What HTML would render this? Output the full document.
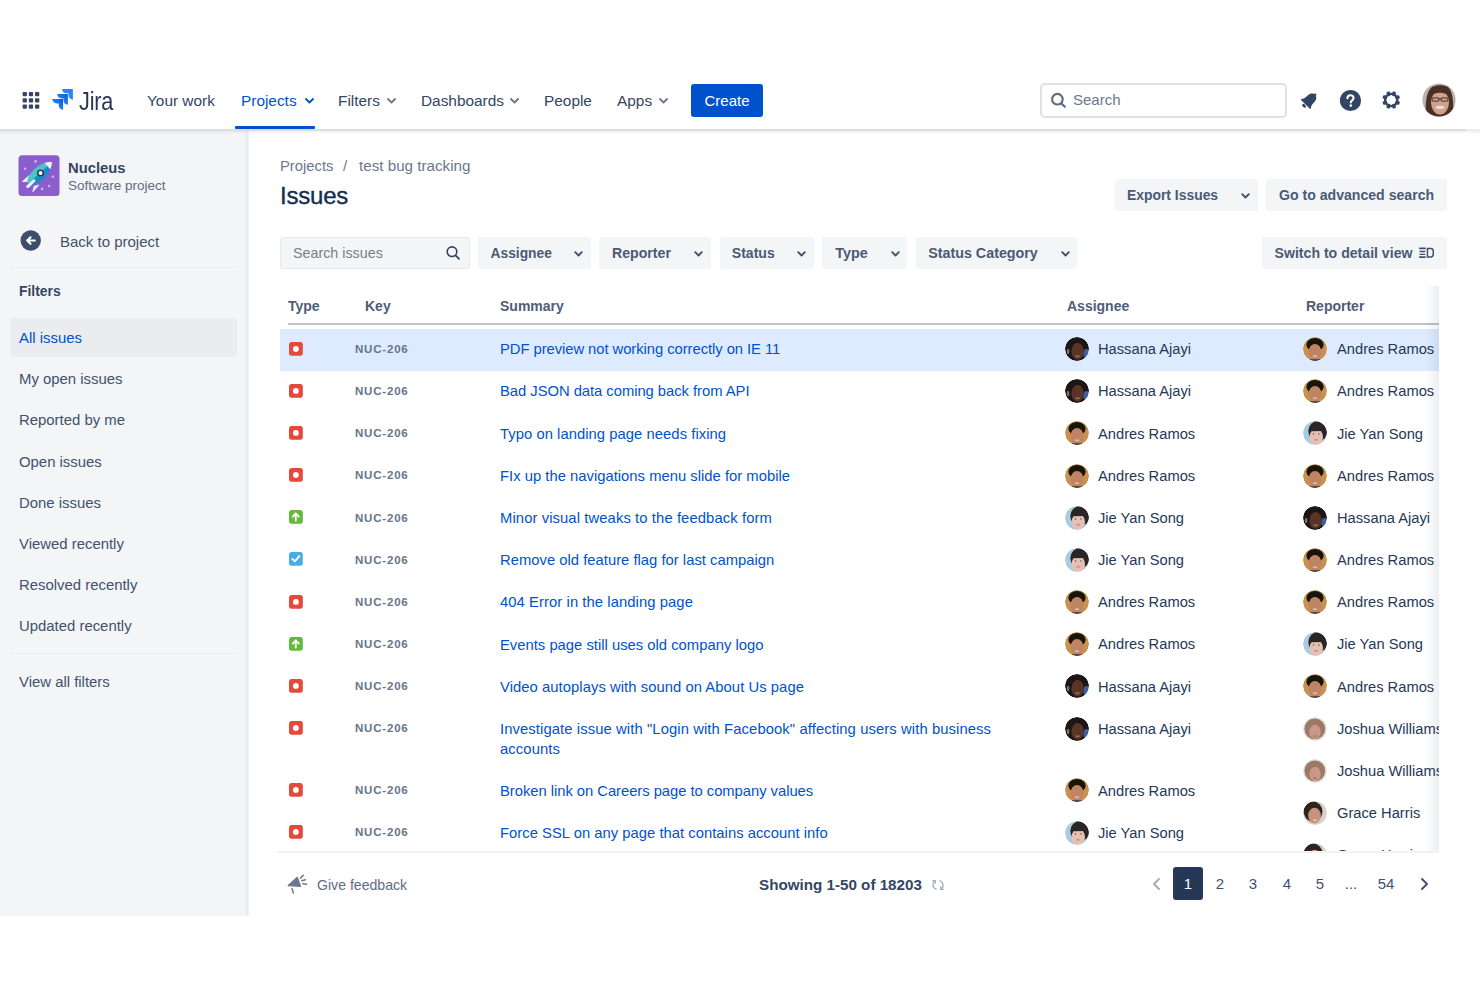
<!DOCTYPE html>
<html><head><meta charset="utf-8">
<style>
*{box-sizing:border-box;margin:0;padding:0}
html,body{width:1480px;height:987px;overflow:hidden;background:#fff;font-family:"Liberation Sans",sans-serif;color:#172B4D;position:relative}
.a{position:absolute;white-space:nowrap}
/* header */
#hdr{position:absolute;left:0;top:72px;width:1480px;height:57px;background:#fff}
#hdrline{position:absolute;left:0;top:129px;width:1466px;height:2px;background:#DADDE3}
#hdrline2{position:absolute;left:1466px;top:129px;width:14px;height:2px;background:#EBECF0}
.nav{position:absolute;top:91.5px;font-size:15.4px;color:#344563;line-height:18px}
.chev{position:absolute;width:9px;height:6px}
/* sidebar */
#side{position:absolute;left:0;top:131px;width:246px;height:784.7px;background:#F4F5F7}
#sideb{position:absolute;left:245px;top:131px;width:4px;height:784.7px;background:linear-gradient(to right,#F1F2F4,#E9EAEE 50%,#EDEEF1 75%,#F5F6F8)}
.si{position:absolute;left:19px;font-size:14.9px;color:#42526E;line-height:18px}
/* main */
.btn{position:absolute;height:32px;background:#F4F5F7;border-radius:3px;font-size:13.8px;font-weight:700;color:#4A5A75;line-height:32px}
.th{position:absolute;top:297px;font-size:14px;font-weight:700;color:#4E5D78;line-height:18px}
.key{position:absolute;left:355px;font-size:11.5px;font-weight:700;color:#67748A;letter-spacing:0.8px;line-height:14px}
.sum{position:absolute;left:500px;font-size:14.8px;color:#0052CC;line-height:20.5px}
.nm{position:absolute;font-size:14.7px;color:#253858;line-height:18px}
.av{position:absolute;width:24px;height:24px;border-radius:50%}
.ic{position:absolute;left:289px;width:14px;height:14px;border-radius:2px}
.pg{position:absolute;top:875.1px;font-size:15px;color:#42526E;line-height:18px;text-align:center}
</style></head>
<body>
<div id="hdr"></div>
<div id="hdrline"></div><div id="hdrline2"></div>

<!-- header content -->
<svg class="a" style="left:22px;top:92px" width="18" height="18" viewBox="0 0 18 18">
<g fill="#344563">
<rect x="0.6" y="0" width="4.3" height="4.3" rx="1"/><rect x="6.8" y="0" width="4.3" height="4.3" rx="1"/><rect x="13" y="0" width="4.3" height="4.3" rx="1"/>
<rect x="0.6" y="6.2" width="4.3" height="4.3" rx="1"/><rect x="6.8" y="6.2" width="4.3" height="4.3" rx="1"/><rect x="13" y="6.2" width="4.3" height="4.3" rx="1"/>
<rect x="0.6" y="12.4" width="4.3" height="4.3" rx="1"/><rect x="6.8" y="12.4" width="4.3" height="4.3" rx="1"/><rect x="13" y="12.4" width="4.3" height="4.3" rx="1"/>
</g></svg>
<svg class="a" style="left:50px;top:87px" width="26" height="25" viewBox="0 0 26 25">
<defs><linearGradient id="jg" gradientUnits="objectBoundingBox" x1="0.95" y1="0.05" x2="0.35" y2="0.6"><stop offset="0" stop-color="#0B5CD6"/><stop offset="1" stop-color="#2684FF"/></linearGradient></defs>
<path transform="translate(12.1,1.9)" fill="#2684FF" d="M0 0H10.8V10.8Q6.6 10.2 6.4 6.2V4.4H4.6Q0.4 4.2 0 0Z"/>
<path transform="translate(7.1,7)" fill="url(#jg)" d="M0 0H10.8V10.8Q6.6 10.2 6.4 6.2V4.4H4.6Q0.4 4.2 0 0Z"/>
<path transform="translate(2.3,12)" fill="url(#jg)" d="M0 0H10.8V10.8Q6.6 10.2 6.4 6.2V4.4H4.6Q0.4 4.2 0 0Z"/>
</svg>
<div class="a" style="left:79px;top:87.5px;font-size:25.5px;color:#253858;line-height:26px;letter-spacing:-0.2px;transform:scaleX(0.85);transform-origin:0 0">Jira</div>
<div class="nav" style="left:147px">Your work</div>
<div class="nav" style="left:241px;color:#0052CC">Projects</div>
<svg class="chev" style="left:305px;top:98px" viewBox="0 0 9 6"><path d="M1 1l3.5 3.5L8 1" stroke="#0052CC" stroke-width="1.8" fill="none" stroke-linecap="round" stroke-linejoin="round"/></svg>
<div class="a" style="left:235px;top:126px;width:80px;height:3px;background:#0052CC;border-radius:1px"></div>
<div class="nav" style="left:338px">Filters</div>
<svg class="chev" style="left:387px;top:98px" viewBox="0 0 9 6"><path d="M1 1l3.5 3.5L8 1" stroke="#6B778C" stroke-width="1.8" fill="none" stroke-linecap="round" stroke-linejoin="round"/></svg>
<div class="nav" style="left:421px">Dashboards</div>
<svg class="chev" style="left:510px;top:98px" viewBox="0 0 9 6"><path d="M1 1l3.5 3.5L8 1" stroke="#6B778C" stroke-width="1.8" fill="none" stroke-linecap="round" stroke-linejoin="round"/></svg>
<div class="nav" style="left:544px">People</div>
<div class="nav" style="left:617px">Apps</div>
<svg class="chev" style="left:659px;top:98px" viewBox="0 0 9 6"><path d="M1 1l3.5 3.5L8 1" stroke="#6B778C" stroke-width="1.8" fill="none" stroke-linecap="round" stroke-linejoin="round"/></svg>
<div class="a" style="left:691px;top:84px;width:72px;height:33px;background:#0052CC;border-radius:3px;color:#fff;font-size:15px;line-height:33px;text-align:center">Create</div>
<div class="a" style="left:1040px;top:83px;width:247px;height:35px;border:2px solid #DFE1E6;border-radius:5px;background:#fff"></div>
<svg class="a" style="left:1050px;top:92px" width="17" height="17" viewBox="0 0 17 17"><circle cx="7.4" cy="7.2" r="5.3" stroke="#5E6C84" stroke-width="2.1" fill="none"/><path d="M11.2 11.2l3.6 3.6" stroke="#5E6C84" stroke-width="2.2" stroke-linecap="round"/></svg>
<div class="a" style="left:1073px;top:91px;font-size:15px;color:#6B778C;line-height:18px">Search</div>
<svg class="a" style="left:1298px;top:89px" width="23" height="23" viewBox="0 0 23 23"><g transform="translate(11.6 11.2) rotate(45) translate(0 -7.6)" fill="#344563"><path d="M0 0C2.9 0 4.7 2.3 4.7 5.2C4.7 8.6 5.1 10.6 6.7 12.6C7 13 6.7 13.5 6.2 13.5H-6.2C-6.7 13.5-7 13-6.7 12.6C-5.1 10.6-4.7 8.6-4.7 5.2C-4.7 2.3-2.9 0 0 0Z"/><rect x="-1.1" y="-1.3" width="2.2" height="2" rx="0.6"/><ellipse cx="0" cy="15.5" rx="2.3" ry="1.4"/></g></svg>
<svg class="a" style="left:1339px;top:89px" width="23" height="23" viewBox="0 0 23 23"><circle cx="11.5" cy="11.5" r="10.6" fill="#344563"/><path d="M8.4 9.2c0-1.8 1.4-3 3.1-3s3.1 1.2 3.1 2.9c0 2.2-2.8 2.3-2.8 4.3" stroke="#fff" stroke-width="2.1" fill="none" stroke-linecap="round"/><circle cx="11.8" cy="16.6" r="1.3" fill="#fff"/></svg>
<svg class="a" style="left:1380px;top:89px" width="22" height="22" viewBox="0 0 22 22"><g transform="translate(11.2 11)" fill="#344563"><rect x="-1.75" y="-9" width="3.5" height="4.5" rx="1" transform="rotate(22.5)"/><rect x="-1.75" y="-9" width="3.5" height="4.5" rx="1" transform="rotate(67.5)"/><rect x="-1.75" y="-9" width="3.5" height="4.5" rx="1" transform="rotate(112.5)"/><rect x="-1.75" y="-9" width="3.5" height="4.5" rx="1" transform="rotate(157.5)"/><rect x="-1.75" y="-9" width="3.5" height="4.5" rx="1" transform="rotate(202.5)"/><rect x="-1.75" y="-9" width="3.5" height="4.5" rx="1" transform="rotate(247.5)"/><rect x="-1.75" y="-9" width="3.5" height="4.5" rx="1" transform="rotate(292.5)"/><rect x="-1.75" y="-9" width="3.5" height="4.5" rx="1" transform="rotate(337.5)"/><circle r="6.2" fill="none" stroke="#344563" stroke-width="2.3"/></g></svg>
<svg class="a" style="left:1422px;top:83px" width="34" height="34" viewBox="0 0 34 34"><clipPath id="hav"><circle cx="17" cy="17" r="16.6"/></clipPath><g clip-path="url(#hav)"><rect width="34" height="34" fill="#b9b4ae"/><path d="M4 34C3 22 4 8 10 4C14 1.5 22 1.5 26 4C31 8 32 22 31 34Z" fill="#4a3026"/><ellipse cx="18" cy="19.5" rx="9" ry="12" fill="#d3a187"/><path d="M9 13C11 8.5 15 7 19 7C23 7 26 9 27 13C24 10.5 20 9.5 17 9.8C13.5 10 11 11.2 9 13Z" fill="#4a3026"/><g stroke="#5c4c4e" stroke-width="1.3" fill="none"><rect x="10.2" y="14.8" width="6.6" height="3.4" rx="1"/><rect x="19.2" y="14.8" width="6.6" height="3.4" rx="1"/><path d="M16.8 16h2.4"/></g><ellipse cx="18" cy="24.3" rx="4.2" ry="1.5" fill="#efe1d9"/></g></svg>

<div id="side"></div><div id="sideb"></div>

<!-- sidebar content -->
<svg class="a" style="left:18px;top:155px" width="42" height="42" viewBox="0 0 42 42">
<rect x="0.5" y="0.2" width="41" height="40.8" rx="3.5" fill="#8A5ECF"/>
<g fill="#C9B3EE"><circle cx="17.6" cy="6.4" r="1.3"/><circle cx="7.1" cy="13.8" r="1.3"/><circle cx="34.8" cy="21.8" r="1.3"/><circle cx="31.1" cy="31.1" r="1.3"/><circle cx="24.1" cy="33.9" r="1.3"/></g>
<path d="M4.3 26.6L11.2 20.6L10.2 26.4Z" fill="#EEF2F8" stroke="#EEF2F8" stroke-width="0.8" stroke-linejoin="round"/>
<path d="M14.8 36.8L21 30L16 31.2Z" fill="#E6ECF4" stroke="#E6ECF4" stroke-width="0.8" stroke-linejoin="round"/>
<g transform="translate(21.5 18.5) rotate(-43)">
<path d="M-15.5 0C-14.5-5.5-6-6.6 1-6.6C5.5-6.5 8.5-5 10.8-4.3V0Z" fill="#4BC6C3"/>
<path d="M-15.5 0C-14.5 5.5-6 6.6 1 6.6C5.5 6.5 8.5 5 10.8 4.3V0Z" fill="#1A8DC5"/>
<path d="M10.8-4.3C13-3.5 15.5-1.6 16.9 0C15.5 1.6 13 3.5 10.8 4.3Z" fill="#F0F3F8"/>
<path d="M-17.5 1.5H-9" stroke="#EEF2F8" stroke-width="3" stroke-linecap="round"/>
</g>
<circle cx="22.5" cy="18" r="2.8" fill="#fff" stroke="#253858" stroke-width="1.5"/>
</svg>
<div class="a" style="left:68px;top:159px;font-size:14.8px;font-weight:700;color:#344563;line-height:18px">Nucleus</div>
<div class="a" style="left:68px;top:177px;font-size:13.5px;color:#5E6C84;line-height:17px">Software project</div>
<svg class="a" style="left:20px;top:230px" width="22" height="22" viewBox="0 0 22 22"><circle cx="10.7" cy="10.5" r="10.2" fill="#3D4E6B"/><path d="M14.8 10.5H7.5M10.5 7.2L7.2 10.5l3.3 3.3" stroke="#fff" stroke-width="2.2" fill="none" stroke-linecap="round" stroke-linejoin="round"/></svg>
<div class="si" style="left:60px;top:233px;font-size:15px">Back to project</div>
<div class="a" style="left:10px;top:267px;width:227px;height:1px;background:#EBECF0"></div>
<div class="si" style="top:282px;font-size:13.9px;font-weight:700;color:#344563">Filters</div>
<div class="a" style="left:10px;top:318px;width:227px;height:39px;background:#EBECF0;border-radius:3px"></div>
<div class="si" style="top:329px;color:#0052CC">All issues</div>
<div class="si" style="top:370px">My open issues</div>
<div class="si" style="top:411px">Reported by me</div>
<div class="si" style="top:453px">Open issues</div>
<div class="si" style="top:494px">Done issues</div>
<div class="si" style="top:535px">Viewed recently</div>
<div class="si" style="top:576px">Resolved recently</div>
<div class="si" style="top:617px">Updated recently</div>
<div class="a" style="left:10px;top:653px;width:227px;height:1px;background:#EBECF0"></div>
<div class="si" style="top:673px">View all filters</div>


<!-- main content -->
<div class="a" style="left:280px;top:157.4px;font-size:14.8px;color:#6B778C;line-height:18px">Projects</div>
<div class="a" style="left:343px;top:157.4px;font-size:15px;color:#6B778C;line-height:18px">/</div>
<div class="a" style="left:359px;top:157.4px;font-size:15.2px;color:#6B778C;line-height:18px">test bug tracking</div>
<div class="a" style="left:280px;top:182px;font-size:24px;font-weight:400;color:#172B4D;line-height:28px;-webkit-text-stroke:0.35px #172B4D;letter-spacing:-0.2px">Issues</div>
<div class="btn" style="left:1115px;top:179px;width:143px;padding-left:12px;font-size:13.9px">Export Issues</div>
<svg class="chev" style="left:1240.5px;top:193px" viewBox="0 0 9 6"><path d="M1.2 1.2l3.3 3.3 3.3-3.3" stroke="#42526E" stroke-width="1.9" fill="none" stroke-linecap="round" stroke-linejoin="round"/></svg>
<div class="btn" style="left:1266px;top:179px;width:181px;padding-left:13px;font-size:14.1px">Go to advanced search</div>
<div class="a" style="left:280px;top:237px;width:190px;height:32px;background:#F4F5F7;border:1px solid #E6E8EC;border-radius:3px"></div>
<div class="a" style="left:293px;top:244px;font-size:14.3px;color:#7A7F87;line-height:18px">Search issues</div>
<svg class="a" style="left:445px;top:245px" width="16" height="16" viewBox="0 0 16 16"><circle cx="7" cy="6.7" r="4.8" stroke="#344563" stroke-width="1.6" fill="none"/><path d="M10.5 10.3l3.6 3.6" stroke="#344563" stroke-width="1.7" stroke-linecap="round"/></svg>
<div class="btn" style="left:478px;top:237px;width:113px;padding-left:12.5px;padding-top:1px;font-size:13.8px">Assignee</div>
<svg class="chev" style="left:573.5px;top:251px" viewBox="0 0 9 6"><path d="M1.2 1.2l3.3 3.3 3.3-3.3" stroke="#42526E" stroke-width="1.9" fill="none" stroke-linecap="round" stroke-linejoin="round"/></svg>
<div class="btn" style="left:599px;top:237px;width:112px;padding-left:13px;font-size:14.15px">Reporter</div>
<svg class="chev" style="left:694px;top:251px" viewBox="0 0 9 6"><path d="M1.2 1.2l3.3 3.3 3.3-3.3" stroke="#42526E" stroke-width="1.9" fill="none" stroke-linecap="round" stroke-linejoin="round"/></svg>
<div class="btn" style="left:719.5px;top:237px;width:94.5px;padding-left:12.3px;font-size:14.05px">Status</div>
<svg class="chev" style="left:797px;top:251px" viewBox="0 0 9 6"><path d="M1.2 1.2l3.3 3.3 3.3-3.3" stroke="#42526E" stroke-width="1.9" fill="none" stroke-linecap="round" stroke-linejoin="round"/></svg>
<div class="btn" style="left:822px;top:237px;width:85px;padding-left:13.3px;font-size:14.4px">Type</div>
<svg class="chev" style="left:891px;top:251px" viewBox="0 0 9 6"><path d="M1.2 1.2l3.3 3.3 3.3-3.3" stroke="#42526E" stroke-width="1.9" fill="none" stroke-linecap="round" stroke-linejoin="round"/></svg>
<div class="btn" style="left:915.5px;top:237px;width:161.5px;padding-left:12.7px;font-size:14.3px">Status Category</div>
<svg class="chev" style="left:1060.5px;top:251px" viewBox="0 0 9 6"><path d="M1.2 1.2l3.3 3.3 3.3-3.3" stroke="#42526E" stroke-width="1.9" fill="none" stroke-linecap="round" stroke-linejoin="round"/></svg>
<div class="btn" style="left:1262px;top:237px;width:185px;padding-left:12.6px;font-size:14.1px">Switch to detail view</div>
<svg class="a" style="left:1418px;top:246px" width="17" height="13" viewBox="0 0 17 13"><g stroke="#42526E" fill="none"><path d="M1.8 2.4h5.2M1.8 11.1h5.2" stroke-width="1.7" stroke-linecap="round"/><path d="M1.6 5.5h5.6M1.6 8.4h5.6" stroke-width="1.3"/><path d="M9.45 2.55H12.6Q15.25 2.55 15.25 5.2V8.3Q15.25 10.95 12.6 10.95H9.45Z" stroke-width="1.5"/></g></svg>

<!-- table -->
<svg width="0" height="0" style="position:absolute"><filter id="avblur"><feGaussianBlur stdDeviation="0.45"/></filter></svg>
<div class="a" style="left:280px;top:286px;width:1159px;height:565px;overflow:hidden">
<div style="position:absolute;left:-280px;top:-286px;width:1480px;height:987px">
<div class="a" style="left:280px;top:329px;width:1159px;height:42px;background:#DEEBFF"></div>
<div class="a" style="left:288px;top:322.6px;width:1151px;height:2.2px;background:#BDC2CC"></div>
<div class="th" style="left:288px">Type</div><div class="th" style="left:365px">Key</div><div class="th" style="left:500px">Summary</div><div class="th" style="left:1067px">Assignee</div><div class="th" style="left:1306px">Reporter</div>
<svg class="ic" style="top:341.5px" width="15" height="15" viewBox="0 0 15 15"><rect x="0" y="0" width="14.8" height="14.8" rx="2.3" fill="#E5493A"/><circle cx="7.4" cy="7.4" r="3.1" fill="#fff"/></svg>
<div class="key" style="top:341.8px">NUC-206</div>
<div class="sum" style="top:339.30px;letter-spacing:-0.057px">PDF preview not working correctly on IE 11</div>
<svg class="av" style="left:1065px;top:337px" width="25" height="25" viewBox="0 0 25 25"><clipPath id="av1"><circle cx="12.5" cy="12.5" r="12.4"/></clipPath><g clip-path="url(#av1)"><g filter="url(#avblur)"><circle cx="12.5" cy="12.5" r="12.5" fill="#1d1613"/><ellipse cx="22.3" cy="17.5" rx="3.2" ry="5" fill="#3f5f9f"/><ellipse cx="3.2" cy="15" rx="1.4" ry="2.8" fill="#7d736d"/><ellipse cx="13.1" cy="15" rx="6.4" ry="8.8" fill="#5a3626"/><ellipse cx="13.1" cy="20" rx="2.4" ry="1" fill="#8e6d60"/></g></g></svg>
<div class="nm" style="left:1098px;top:340.1px">Hassana Ajayi</div>
<svg class="ic" style="top:383.68px" width="15" height="15" viewBox="0 0 15 15"><rect x="0" y="0" width="14.8" height="14.8" rx="2.3" fill="#E5493A"/><circle cx="7.4" cy="7.4" r="3.1" fill="#fff"/></svg>
<div class="key" style="top:384.0px">NUC-206</div>
<div class="sum" style="top:381.48px;letter-spacing:-0.041px">Bad JSON data coming back from API</div>
<svg class="av" style="left:1065px;top:379.18px" width="25" height="25" viewBox="0 0 25 25"><clipPath id="av2"><circle cx="12.5" cy="12.5" r="12.4"/></clipPath><g clip-path="url(#av2)"><g filter="url(#avblur)"><circle cx="12.5" cy="12.5" r="12.5" fill="#1d1613"/><ellipse cx="22.3" cy="17.5" rx="3.2" ry="5" fill="#3f5f9f"/><ellipse cx="3.2" cy="15" rx="1.4" ry="2.8" fill="#7d736d"/><ellipse cx="13.1" cy="15" rx="6.4" ry="8.8" fill="#5a3626"/><ellipse cx="13.1" cy="20" rx="2.4" ry="1" fill="#8e6d60"/></g></g></svg>
<div class="nm" style="left:1098px;top:382.3px">Hassana Ajayi</div>
<svg class="ic" style="top:425.86px" width="15" height="15" viewBox="0 0 15 15"><rect x="0" y="0" width="14.8" height="14.8" rx="2.3" fill="#E5493A"/><circle cx="7.4" cy="7.4" r="3.1" fill="#fff"/></svg>
<div class="key" style="top:426.2px">NUC-206</div>
<div class="sum" style="top:423.66px;letter-spacing:0.044px">Typo on landing page needs fixing</div>
<svg class="av" style="left:1065px;top:421.36px" width="25" height="25" viewBox="0 0 25 25"><clipPath id="av3"><circle cx="12.5" cy="12.5" r="12.4"/></clipPath><g clip-path="url(#av3)"><g filter="url(#avblur)"><circle cx="12.5" cy="12.5" r="12.5" fill="#c8914f"/><ellipse cx="12.5" cy="8" rx="9" ry="7" fill="#17120f"/><ellipse cx="12.5" cy="15.5" rx="6.6" ry="8.2" fill="#bf8464"/><ellipse cx="12.5" cy="20" rx="2.6" ry="1.1" fill="#dcb8a6"/><rect x="7" y="23.2" width="11" height="2" fill="#3a3438"/></g></g></svg>
<div class="nm" style="left:1098px;top:424.5px">Andres Ramos</div>
<svg class="ic" style="top:468.04px" width="15" height="15" viewBox="0 0 15 15"><rect x="0" y="0" width="14.8" height="14.8" rx="2.3" fill="#E5493A"/><circle cx="7.4" cy="7.4" r="3.1" fill="#fff"/></svg>
<div class="key" style="top:468.3px">NUC-206</div>
<div class="sum" style="top:465.84px;letter-spacing:0.011px">FIx up the navigations menu slide for mobile</div>
<svg class="av" style="left:1065px;top:463.54px" width="25" height="25" viewBox="0 0 25 25"><clipPath id="av4"><circle cx="12.5" cy="12.5" r="12.4"/></clipPath><g clip-path="url(#av4)"><g filter="url(#avblur)"><circle cx="12.5" cy="12.5" r="12.5" fill="#c8914f"/><ellipse cx="12.5" cy="8" rx="9" ry="7" fill="#17120f"/><ellipse cx="12.5" cy="15.5" rx="6.6" ry="8.2" fill="#bf8464"/><ellipse cx="12.5" cy="20" rx="2.6" ry="1.1" fill="#dcb8a6"/><rect x="7" y="23.2" width="11" height="2" fill="#3a3438"/></g></g></svg>
<div class="nm" style="left:1098px;top:466.6px">Andres Ramos</div>
<svg class="ic" style="top:510.22px" width="15" height="15" viewBox="0 0 15 15"><rect x="0" y="0" width="14.8" height="14.8" rx="2.3" fill="#63BA3C"/><path d="M7.25 11.3V3.8M4 7L7.25 3.7 10.5 7" stroke="#fff" stroke-width="2" fill="none" stroke-linecap="round" stroke-linejoin="round"/></svg>
<div class="key" style="top:510.5px">NUC-206</div>
<div class="sum" style="top:508.02px;letter-spacing:0.095px">Minor visual tweaks to the feedback form</div>
<svg class="av" style="left:1065px;top:505.72px" width="25" height="25" viewBox="0 0 25 25"><clipPath id="av5"><circle cx="12.5" cy="12.5" r="12.4"/></clipPath><g clip-path="url(#av5)"><g filter="url(#avblur)"><circle cx="12.5" cy="12.5" r="12.5" fill="#a9cde0"/><ellipse cx="15.5" cy="10.5" rx="10" ry="10.5" fill="#2a2527"/><ellipse cx="13.8" cy="16.8" rx="7" ry="8.6" fill="#e6c0b2"/><path d="M6.6 10.6C7 6 10.5 3.6 15 3.6C19.5 3.6 21.8 6.5 22 10.5Z" fill="#2a2527"/><circle cx="11" cy="13.6" r="0.8" fill="#5a4a50"/><circle cx="16.6" cy="13.6" r="0.8" fill="#5a4a50"/><ellipse cx="13.8" cy="19.6" rx="2.3" ry="1" fill="#d88f99"/></g></g></svg>
<div class="nm" style="left:1098px;top:508.8px">Jie Yan Song</div>
<svg class="ic" style="top:552.4px" width="15" height="15" viewBox="0 0 15 15"><rect x="0" y="0" width="14.8" height="14.8" rx="2.3" fill="#4BADE8"/><path d="M3.6 7.4l2.6 2.6 4.9-5.6" stroke="#fff" stroke-width="2" fill="none" stroke-linecap="round" stroke-linejoin="round"/></svg>
<div class="key" style="top:552.7px">NUC-206</div>
<div class="sum" style="top:550.20px;letter-spacing:0.01px">Remove old feature flag for last campaign</div>
<svg class="av" style="left:1065px;top:547.9px" width="25" height="25" viewBox="0 0 25 25"><clipPath id="av6"><circle cx="12.5" cy="12.5" r="12.4"/></clipPath><g clip-path="url(#av6)"><g filter="url(#avblur)"><circle cx="12.5" cy="12.5" r="12.5" fill="#a9cde0"/><ellipse cx="15.5" cy="10.5" rx="10" ry="10.5" fill="#2a2527"/><ellipse cx="13.8" cy="16.8" rx="7" ry="8.6" fill="#e6c0b2"/><path d="M6.6 10.6C7 6 10.5 3.6 15 3.6C19.5 3.6 21.8 6.5 22 10.5Z" fill="#2a2527"/><circle cx="11" cy="13.6" r="0.8" fill="#5a4a50"/><circle cx="16.6" cy="13.6" r="0.8" fill="#5a4a50"/><ellipse cx="13.8" cy="19.6" rx="2.3" ry="1" fill="#d88f99"/></g></g></svg>
<div class="nm" style="left:1098px;top:551.0px">Jie Yan Song</div>
<svg class="ic" style="top:594.58px" width="15" height="15" viewBox="0 0 15 15"><rect x="0" y="0" width="14.8" height="14.8" rx="2.3" fill="#E5493A"/><circle cx="7.4" cy="7.4" r="3.1" fill="#fff"/></svg>
<div class="key" style="top:594.9px">NUC-206</div>
<div class="sum" style="top:592.38px;letter-spacing:0.073px">404 Error in the landing page</div>
<svg class="av" style="left:1065px;top:590.08px" width="25" height="25" viewBox="0 0 25 25"><clipPath id="av7"><circle cx="12.5" cy="12.5" r="12.4"/></clipPath><g clip-path="url(#av7)"><g filter="url(#avblur)"><circle cx="12.5" cy="12.5" r="12.5" fill="#c8914f"/><ellipse cx="12.5" cy="8" rx="9" ry="7" fill="#17120f"/><ellipse cx="12.5" cy="15.5" rx="6.6" ry="8.2" fill="#bf8464"/><ellipse cx="12.5" cy="20" rx="2.6" ry="1.1" fill="#dcb8a6"/><rect x="7" y="23.2" width="11" height="2" fill="#3a3438"/></g></g></svg>
<div class="nm" style="left:1098px;top:593.2px">Andres Ramos</div>
<svg class="ic" style="top:636.76px" width="15" height="15" viewBox="0 0 15 15"><rect x="0" y="0" width="14.8" height="14.8" rx="2.3" fill="#63BA3C"/><path d="M7.25 11.3V3.8M4 7L7.25 3.7 10.5 7" stroke="#fff" stroke-width="2" fill="none" stroke-linecap="round" stroke-linejoin="round"/></svg>
<div class="key" style="top:637.1px">NUC-206</div>
<div class="sum" style="top:634.56px;letter-spacing:0.005px">Events page still uses old company logo</div>
<svg class="av" style="left:1065px;top:632.26px" width="25" height="25" viewBox="0 0 25 25"><clipPath id="av8"><circle cx="12.5" cy="12.5" r="12.4"/></clipPath><g clip-path="url(#av8)"><g filter="url(#avblur)"><circle cx="12.5" cy="12.5" r="12.5" fill="#c8914f"/><ellipse cx="12.5" cy="8" rx="9" ry="7" fill="#17120f"/><ellipse cx="12.5" cy="15.5" rx="6.6" ry="8.2" fill="#bf8464"/><ellipse cx="12.5" cy="20" rx="2.6" ry="1.1" fill="#dcb8a6"/><rect x="7" y="23.2" width="11" height="2" fill="#3a3438"/></g></g></svg>
<div class="nm" style="left:1098px;top:635.4px">Andres Ramos</div>
<svg class="ic" style="top:678.94px" width="15" height="15" viewBox="0 0 15 15"><rect x="0" y="0" width="14.8" height="14.8" rx="2.3" fill="#E5493A"/><circle cx="7.4" cy="7.4" r="3.1" fill="#fff"/></svg>
<div class="key" style="top:679.2px">NUC-206</div>
<div class="sum" style="top:676.74px;letter-spacing:0.054px">Video autoplays with sound on About Us page</div>
<svg class="av" style="left:1065px;top:674.44px" width="25" height="25" viewBox="0 0 25 25"><clipPath id="av9"><circle cx="12.5" cy="12.5" r="12.4"/></clipPath><g clip-path="url(#av9)"><g filter="url(#avblur)"><circle cx="12.5" cy="12.5" r="12.5" fill="#1d1613"/><ellipse cx="22.3" cy="17.5" rx="3.2" ry="5" fill="#3f5f9f"/><ellipse cx="3.2" cy="15" rx="1.4" ry="2.8" fill="#7d736d"/><ellipse cx="13.1" cy="15" rx="6.4" ry="8.8" fill="#5a3626"/><ellipse cx="13.1" cy="20" rx="2.4" ry="1" fill="#8e6d60"/></g></g></svg>
<div class="nm" style="left:1098px;top:677.5px">Hassana Ajayi</div>
<svg class="ic" style="top:721.12px" width="15" height="15" viewBox="0 0 15 15"><rect x="0" y="0" width="14.8" height="14.8" rx="2.3" fill="#E5493A"/><circle cx="7.4" cy="7.4" r="3.1" fill="#fff"/></svg>
<div class="key" style="top:721.4px">NUC-206</div>
<div class="sum" style="top:718.92px;letter-spacing:0.096px">Investigate issue with "Login with Facebook" affecting users with business<br>accounts</div>
<svg class="av" style="left:1065px;top:716.62px" width="25" height="25" viewBox="0 0 25 25"><clipPath id="av10"><circle cx="12.5" cy="12.5" r="12.4"/></clipPath><g clip-path="url(#av10)"><g filter="url(#avblur)"><circle cx="12.5" cy="12.5" r="12.5" fill="#1d1613"/><ellipse cx="22.3" cy="17.5" rx="3.2" ry="5" fill="#3f5f9f"/><ellipse cx="3.2" cy="15" rx="1.4" ry="2.8" fill="#7d736d"/><ellipse cx="13.1" cy="15" rx="6.4" ry="8.8" fill="#5a3626"/><ellipse cx="13.1" cy="20" rx="2.4" ry="1" fill="#8e6d60"/></g></g></svg>
<div class="nm" style="left:1098px;top:719.7px">Hassana Ajayi</div>
<svg class="ic" style="top:782.92px" width="15" height="15" viewBox="0 0 15 15"><rect x="0" y="0" width="14.8" height="14.8" rx="2.3" fill="#E5493A"/><circle cx="7.4" cy="7.4" r="3.1" fill="#fff"/></svg>
<div class="key" style="top:783.2px">NUC-206</div>
<div class="sum" style="top:780.72px;letter-spacing:-0.042px">Broken link on Careers page to company values</div>
<svg class="av" style="left:1065px;top:778.42px" width="25" height="25" viewBox="0 0 25 25"><clipPath id="av11"><circle cx="12.5" cy="12.5" r="12.4"/></clipPath><g clip-path="url(#av11)"><g filter="url(#avblur)"><circle cx="12.5" cy="12.5" r="12.5" fill="#c8914f"/><ellipse cx="12.5" cy="8" rx="9" ry="7" fill="#17120f"/><ellipse cx="12.5" cy="15.5" rx="6.6" ry="8.2" fill="#bf8464"/><ellipse cx="12.5" cy="20" rx="2.6" ry="1.1" fill="#dcb8a6"/><rect x="7" y="23.2" width="11" height="2" fill="#3a3438"/></g></g></svg>
<div class="nm" style="left:1098px;top:781.5px">Andres Ramos</div>
<svg class="ic" style="top:825.1px" width="15" height="15" viewBox="0 0 15 15"><rect x="0" y="0" width="14.8" height="14.8" rx="2.3" fill="#E5493A"/><circle cx="7.4" cy="7.4" r="3.1" fill="#fff"/></svg>
<div class="key" style="top:825.4px">NUC-206</div>
<div class="sum" style="top:822.90px;letter-spacing:0.018px">Force SSL on any page that contains account info</div>
<svg class="av" style="left:1065px;top:820.6px" width="25" height="25" viewBox="0 0 25 25"><clipPath id="av12"><circle cx="12.5" cy="12.5" r="12.4"/></clipPath><g clip-path="url(#av12)"><g filter="url(#avblur)"><circle cx="12.5" cy="12.5" r="12.5" fill="#a9cde0"/><ellipse cx="15.5" cy="10.5" rx="10" ry="10.5" fill="#2a2527"/><ellipse cx="13.8" cy="16.8" rx="7" ry="8.6" fill="#e6c0b2"/><path d="M6.6 10.6C7 6 10.5 3.6 15 3.6C19.5 3.6 21.8 6.5 22 10.5Z" fill="#2a2527"/><circle cx="11" cy="13.6" r="0.8" fill="#5a4a50"/><circle cx="16.6" cy="13.6" r="0.8" fill="#5a4a50"/><ellipse cx="13.8" cy="19.6" rx="2.3" ry="1" fill="#d88f99"/></g></g></svg>
<div class="nm" style="left:1098px;top:823.7px">Jie Yan Song</div>
<svg class="av" style="left:1303px;top:337.0px" width="25" height="25" viewBox="0 0 25 25"><clipPath id="av13"><circle cx="12.5" cy="12.5" r="12.4"/></clipPath><g clip-path="url(#av13)"><g filter="url(#avblur)"><circle cx="12.5" cy="12.5" r="12.5" fill="#c8914f"/><ellipse cx="12.5" cy="8" rx="9" ry="7" fill="#17120f"/><ellipse cx="12.5" cy="15.5" rx="6.6" ry="8.2" fill="#bf8464"/><ellipse cx="12.5" cy="20" rx="2.6" ry="1.1" fill="#dcb8a6"/><rect x="7" y="23.2" width="11" height="2" fill="#3a3438"/></g></g></svg>
<div class="nm" style="left:1337px;top:340.1px">Andres Ramos</div>
<svg class="av" style="left:1303px;top:379.18px" width="25" height="25" viewBox="0 0 25 25"><clipPath id="av14"><circle cx="12.5" cy="12.5" r="12.4"/></clipPath><g clip-path="url(#av14)"><g filter="url(#avblur)"><circle cx="12.5" cy="12.5" r="12.5" fill="#c8914f"/><ellipse cx="12.5" cy="8" rx="9" ry="7" fill="#17120f"/><ellipse cx="12.5" cy="15.5" rx="6.6" ry="8.2" fill="#bf8464"/><ellipse cx="12.5" cy="20" rx="2.6" ry="1.1" fill="#dcb8a6"/><rect x="7" y="23.2" width="11" height="2" fill="#3a3438"/></g></g></svg>
<div class="nm" style="left:1337px;top:382.3px">Andres Ramos</div>
<svg class="av" style="left:1303px;top:421.36px" width="25" height="25" viewBox="0 0 25 25"><clipPath id="av15"><circle cx="12.5" cy="12.5" r="12.4"/></clipPath><g clip-path="url(#av15)"><g filter="url(#avblur)"><circle cx="12.5" cy="12.5" r="12.5" fill="#a9cde0"/><ellipse cx="15.5" cy="10.5" rx="10" ry="10.5" fill="#2a2527"/><ellipse cx="13.8" cy="16.8" rx="7" ry="8.6" fill="#e6c0b2"/><path d="M6.6 10.6C7 6 10.5 3.6 15 3.6C19.5 3.6 21.8 6.5 22 10.5Z" fill="#2a2527"/><circle cx="11" cy="13.6" r="0.8" fill="#5a4a50"/><circle cx="16.6" cy="13.6" r="0.8" fill="#5a4a50"/><ellipse cx="13.8" cy="19.6" rx="2.3" ry="1" fill="#d88f99"/></g></g></svg>
<div class="nm" style="left:1337px;top:424.5px">Jie Yan Song</div>
<svg class="av" style="left:1303px;top:463.54px" width="25" height="25" viewBox="0 0 25 25"><clipPath id="av16"><circle cx="12.5" cy="12.5" r="12.4"/></clipPath><g clip-path="url(#av16)"><g filter="url(#avblur)"><circle cx="12.5" cy="12.5" r="12.5" fill="#c8914f"/><ellipse cx="12.5" cy="8" rx="9" ry="7" fill="#17120f"/><ellipse cx="12.5" cy="15.5" rx="6.6" ry="8.2" fill="#bf8464"/><ellipse cx="12.5" cy="20" rx="2.6" ry="1.1" fill="#dcb8a6"/><rect x="7" y="23.2" width="11" height="2" fill="#3a3438"/></g></g></svg>
<div class="nm" style="left:1337px;top:466.6px">Andres Ramos</div>
<svg class="av" style="left:1303px;top:505.72px" width="25" height="25" viewBox="0 0 25 25"><clipPath id="av17"><circle cx="12.5" cy="12.5" r="12.4"/></clipPath><g clip-path="url(#av17)"><g filter="url(#avblur)"><circle cx="12.5" cy="12.5" r="12.5" fill="#1d1613"/><ellipse cx="22.3" cy="17.5" rx="3.2" ry="5" fill="#3f5f9f"/><ellipse cx="3.2" cy="15" rx="1.4" ry="2.8" fill="#7d736d"/><ellipse cx="13.1" cy="15" rx="6.4" ry="8.8" fill="#5a3626"/><ellipse cx="13.1" cy="20" rx="2.4" ry="1" fill="#8e6d60"/></g></g></svg>
<div class="nm" style="left:1337px;top:508.8px">Hassana Ajayi</div>
<svg class="av" style="left:1303px;top:547.9px" width="25" height="25" viewBox="0 0 25 25"><clipPath id="av18"><circle cx="12.5" cy="12.5" r="12.4"/></clipPath><g clip-path="url(#av18)"><g filter="url(#avblur)"><circle cx="12.5" cy="12.5" r="12.5" fill="#c8914f"/><ellipse cx="12.5" cy="8" rx="9" ry="7" fill="#17120f"/><ellipse cx="12.5" cy="15.5" rx="6.6" ry="8.2" fill="#bf8464"/><ellipse cx="12.5" cy="20" rx="2.6" ry="1.1" fill="#dcb8a6"/><rect x="7" y="23.2" width="11" height="2" fill="#3a3438"/></g></g></svg>
<div class="nm" style="left:1337px;top:551.0px">Andres Ramos</div>
<svg class="av" style="left:1303px;top:590.08px" width="25" height="25" viewBox="0 0 25 25"><clipPath id="av19"><circle cx="12.5" cy="12.5" r="12.4"/></clipPath><g clip-path="url(#av19)"><g filter="url(#avblur)"><circle cx="12.5" cy="12.5" r="12.5" fill="#c8914f"/><ellipse cx="12.5" cy="8" rx="9" ry="7" fill="#17120f"/><ellipse cx="12.5" cy="15.5" rx="6.6" ry="8.2" fill="#bf8464"/><ellipse cx="12.5" cy="20" rx="2.6" ry="1.1" fill="#dcb8a6"/><rect x="7" y="23.2" width="11" height="2" fill="#3a3438"/></g></g></svg>
<div class="nm" style="left:1337px;top:593.2px">Andres Ramos</div>
<svg class="av" style="left:1303px;top:632.26px" width="25" height="25" viewBox="0 0 25 25"><clipPath id="av20"><circle cx="12.5" cy="12.5" r="12.4"/></clipPath><g clip-path="url(#av20)"><g filter="url(#avblur)"><circle cx="12.5" cy="12.5" r="12.5" fill="#a9cde0"/><ellipse cx="15.5" cy="10.5" rx="10" ry="10.5" fill="#2a2527"/><ellipse cx="13.8" cy="16.8" rx="7" ry="8.6" fill="#e6c0b2"/><path d="M6.6 10.6C7 6 10.5 3.6 15 3.6C19.5 3.6 21.8 6.5 22 10.5Z" fill="#2a2527"/><circle cx="11" cy="13.6" r="0.8" fill="#5a4a50"/><circle cx="16.6" cy="13.6" r="0.8" fill="#5a4a50"/><ellipse cx="13.8" cy="19.6" rx="2.3" ry="1" fill="#d88f99"/></g></g></svg>
<div class="nm" style="left:1337px;top:635.4px">Jie Yan Song</div>
<svg class="av" style="left:1303px;top:674.44px" width="25" height="25" viewBox="0 0 25 25"><clipPath id="av21"><circle cx="12.5" cy="12.5" r="12.4"/></clipPath><g clip-path="url(#av21)"><g filter="url(#avblur)"><circle cx="12.5" cy="12.5" r="12.5" fill="#c8914f"/><ellipse cx="12.5" cy="8" rx="9" ry="7" fill="#17120f"/><ellipse cx="12.5" cy="15.5" rx="6.6" ry="8.2" fill="#bf8464"/><ellipse cx="12.5" cy="20" rx="2.6" ry="1.1" fill="#dcb8a6"/><rect x="7" y="23.2" width="11" height="2" fill="#3a3438"/></g></g></svg>
<div class="nm" style="left:1337px;top:677.5px">Andres Ramos</div>
<svg class="av" style="left:1303px;top:716.62px" width="25" height="25" viewBox="0 0 25 25"><clipPath id="av22"><circle cx="12.5" cy="12.5" r="12.4"/></clipPath><g clip-path="url(#av22)"><g filter="url(#avblur)"><circle cx="12.5" cy="12.5" r="12.5" fill="#e2ded9"/><circle cx="12.3" cy="12.3" r="10.8" fill="#9b7966"/><ellipse cx="12.5" cy="15.6" rx="6" ry="7.4" fill="#c99889"/><ellipse cx="12.5" cy="19.8" rx="2.3" ry="0.9" fill="#9a7a70"/></g></g></svg>
<div class="nm" style="left:1337px;top:719.7px">Joshua Williams</div>
<svg class="av" style="left:1303px;top:758.8px" width="25" height="25" viewBox="0 0 25 25"><clipPath id="av23"><circle cx="12.5" cy="12.5" r="12.4"/></clipPath><g clip-path="url(#av23)"><g filter="url(#avblur)"><circle cx="12.5" cy="12.5" r="12.5" fill="#e2ded9"/><circle cx="12.3" cy="12.3" r="10.8" fill="#9b7966"/><ellipse cx="12.5" cy="15.6" rx="6" ry="7.4" fill="#c99889"/><ellipse cx="12.5" cy="19.8" rx="2.3" ry="0.9" fill="#9a7a70"/></g></g></svg>
<div class="nm" style="left:1337px;top:761.9px">Joshua Williams</div>
<svg class="av" style="left:1303px;top:800.98px" width="25" height="25" viewBox="0 0 25 25"><clipPath id="av24"><circle cx="12.5" cy="12.5" r="12.4"/></clipPath><g clip-path="url(#av24)"><g filter="url(#avblur)"><circle cx="12.5" cy="12.5" r="12.5" fill="#d4d2cd"/><ellipse cx="10.5" cy="11" rx="9.8" ry="10.5" fill="#30231d"/><ellipse cx="12" cy="15.2" rx="6.6" ry="8.2" fill="#c8937d"/><ellipse cx="12.6" cy="20" rx="2.4" ry="1" fill="#e0c0b8"/></g></g></svg>
<div class="nm" style="left:1337px;top:804.1px">Grace Harris</div>
<svg class="av" style="left:1303px;top:843.16px" width="25" height="25" viewBox="0 0 25 25"><clipPath id="av25"><circle cx="12.5" cy="12.5" r="12.4"/></clipPath><g clip-path="url(#av25)"><g filter="url(#avblur)"><circle cx="12.5" cy="12.5" r="12.5" fill="#d4d2cd"/><ellipse cx="10.5" cy="11" rx="9.8" ry="10.5" fill="#30231d"/><ellipse cx="12" cy="15.2" rx="6.6" ry="8.2" fill="#c8937d"/><ellipse cx="12.6" cy="20" rx="2.4" ry="1" fill="#e0c0b8"/></g></g></svg>
<div class="nm" style="left:1337px;top:846.3px">Grace Harris</div>
</div>
<div class="a" style="right:0;top:0;width:14px;height:565px;background:linear-gradient(to right,rgba(9,30,66,0),rgba(9,30,66,0.08))"></div>
</div>
<div class="a" style="left:277px;top:851px;width:1162px;height:2px;background:#F1F2F4"></div>
<!-- footer -->
<svg class="a" style="left:286px;top:873px" width="22" height="22" viewBox="0 0 22 22"><path d="M2.3 12.6L11.2 4.5L14.4 13.2Z" fill="#6B778C" stroke="#6B778C" stroke-width="1.4" stroke-linejoin="round"/><g stroke="#6B778C" stroke-width="1.5" stroke-linecap="round"><path d="M6 15.6l1.4 4.3"/><path d="M14.6 4.9l2.7-2.7"/><path d="M15.9 7.8l3.5-1"/><path d="M16.8 10.7l3.9.5"/></g></svg>
<div class="a" style="left:317px;top:876px;font-size:14.1px;color:#5E6C84;line-height:18px">Give feedback</div>
<div class="a" style="left:759px;top:876.4px;font-size:15.2px;font-weight:700;color:#344563;line-height:18px">Showing 1-50 of 18203</div>
<svg class="a" style="left:931px;top:878px" width="14" height="14" viewBox="0 0 14 14"><g stroke="#A5ADBA" stroke-width="1.4" fill="none" stroke-linecap="round"><path d="M3.2 3.5A4.8 4.8 0 0 0 5 11.2"/><path d="M10.8 10.5A4.8 4.8 0 0 0 9 2.8"/><path d="M1.8 2.6h2.4v2.4"/><path d="M12.2 11.4H9.8V9"/></g></svg>
<svg class="a" style="left:1151px;top:877px" width="11" height="14" viewBox="0 0 11 14"><path d="M8 2L3 7l5 5" stroke="#A5ADBA" stroke-width="2" fill="none" stroke-linecap="round" stroke-linejoin="round"/></svg>
<div class="a" style="left:1173px;top:867px;width:30px;height:33px;background:#253858;border-radius:3px;color:#fff;font-size:15px;line-height:33px;text-align:center">1</div>
<div class="pg" style="left:1205px;width:30px">2</div>
<div class="pg" style="left:1238px;width:30px">3</div>
<div class="pg" style="left:1272px;width:30px">4</div>
<div class="pg" style="left:1305px;width:30px">5</div>
<div class="pg" style="left:1336px;width:30px">...</div>
<div class="pg" style="left:1371px;width:30px">54</div>
<svg class="a" style="left:1419px;top:877px" width="11" height="14" viewBox="0 0 11 14"><path d="M3 2l5 5-5 5" stroke="#42526E" stroke-width="2" fill="none" stroke-linecap="round" stroke-linejoin="round"/></svg>

<div class="a" style="left:0;top:131px;width:1480px;height:3px;background:linear-gradient(to bottom,rgba(9,30,66,0.07),rgba(9,30,66,0))"></div>
</body></html>
